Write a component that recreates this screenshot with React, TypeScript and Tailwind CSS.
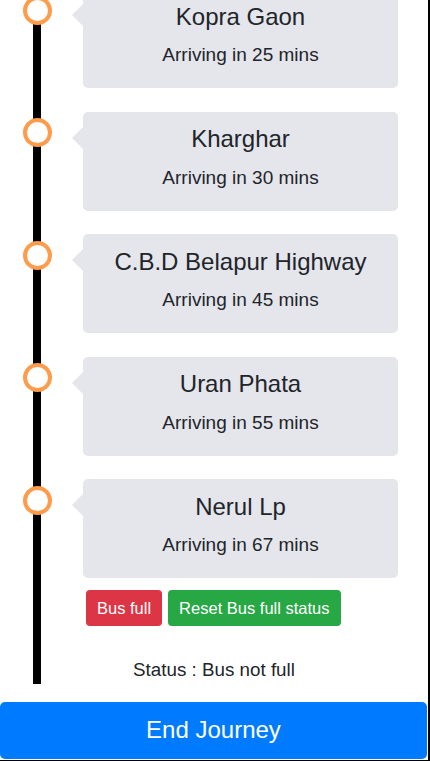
const stops = [
  { name: "Kopra Gaon", mins: 25 },
  { name: "Kharghar", mins: 30 },
  { name: "C.B.D Belapur Highway", mins: 45 },
  { name: "Uran Phata", mins: 55 },
  { name: "Nerul Lp", mins: 67 },
]

function StopRow({ name, mins, last }: { name: string; mins: number; last: boolean }) {
  return (
    <div className={`flex items-start ${last ? "" : "mb-[23.5px]"}`}>
      <div className="relative z-10 -ml-[18.5px] mt-[6.5px] h-[29px] w-[29px] shrink-0 rounded-full border-[4px] border-[#fe9c4c] bg-white" />
      <div className="relative ml-[31.5px] h-[99px] w-[315px] rounded-[5px] bg-[#e5e5ec] pt-[13.5px] text-center text-[#212529]">
        <div className="absolute right-full top-[15px] h-0 w-0 border-y-[11px] border-r-[11px] border-y-transparent border-r-[#e5e5ec]" />
        <div className="text-[24px] leading-[1.2]">{name}</div>
        <div className="mt-[10px] text-[19px] leading-[1.5]">Arriving in {mins} mins</div>
      </div>
    </div>
  )
}

export default function App() {
  return (
    <div
      className="h-[761px] w-[430px] overflow-hidden border-b border-r-2 border-black bg-white"
      style={{ fontFamily: '"Liberation Sans", Arial, sans-serif' }}
    >
      <div className="-mt-[11px] ml-[33px] border-l-[8px] border-black">
        {stops.map((s, i) => (
          <StopRow key={s.name} name={s.name} mins={s.mins} last={i === stops.length - 1} />
        ))}

        <div className="ml-[45px] mt-[12px] flex gap-[6px]">
          <button className="h-[36px] rounded-[4px] bg-[#dc3545] px-[11px] text-[16.5px] text-white">Bus full</button>
          <button className="h-[36px] rounded-[4px] bg-[#28a745] px-[11px] text-[16.5px] text-white">
            Reset Bus full status
          </button>
        </div>

        <div className="mt-[29.5px] pr-[41px] text-center text-[18.8px] leading-[28px] text-[#212529]">
          Status : Bus not full
        </div>
      </div>

      <button className="mt-[18.2px] h-[57px] w-[427px] rounded-[5px] bg-[#007bff] text-[24px] text-white">
        End Journey
      </button>
    </div>
  )
}
